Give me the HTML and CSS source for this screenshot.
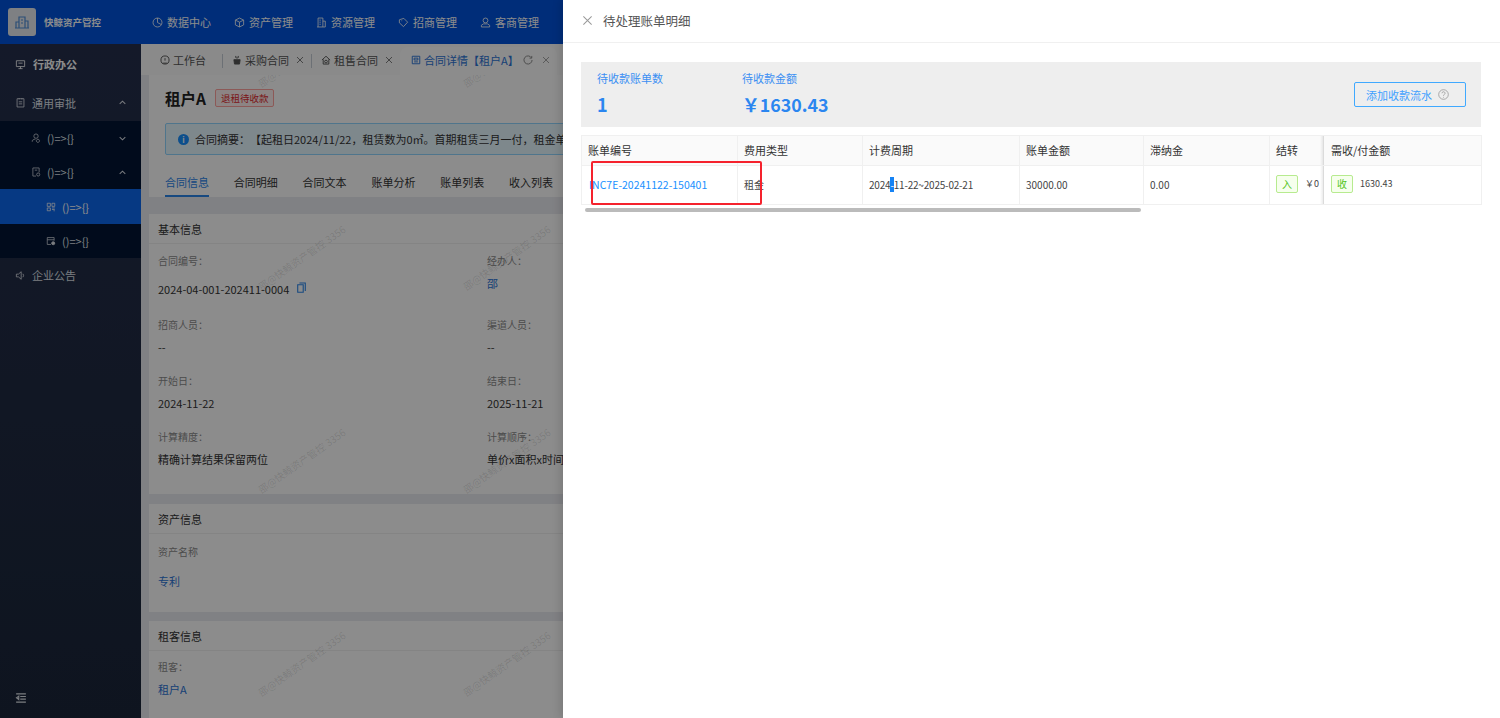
FILE: index.html
```html
<!DOCTYPE html>
<html lang="zh-CN">
<head>
    <meta charset="UTF-8">
    <meta name="viewport" content="width=device-width, initial-scale=1.0">
    <title>快鲸资产管控</title>
    <link rel="stylesheet" href="styles.css">
</head>
<body>
    <svg class="sprite" xmlns="http://www.w3.org/2000/svg">
        <symbol id="i-close" viewBox="0 0 16 16"><path d="M2 2l12 12M14 2L2 14"/></symbol>
        <symbol id="i-up" viewBox="0 0 16 16"><path d="M3 10.5l5-5 5 5"/></symbol>
        <symbol id="i-down" viewBox="0 0 16 16"><path d="M3 5.5l5 5 5-5"/></symbol>
    </svg>

    <header class="topbar">
        <div class="brand">
            <div class="brand-logo">
                <svg viewBox="0 0 16 16"><path d="M2 14V8h3M5 14V3h6v11M11 7h3v7M1 14h14M7 6h2M7 9h2"/></svg>
            </div>
            <span>快鲸资产管控</span>
        </div>
        <nav class="topnav">
            <a><svg viewBox="0 0 16 16"><circle cx="8" cy="8" r="6.5"/><path d="M8 8V1.5M8 8l5.5 3"/></svg>数据中心</a>
            <a><svg viewBox="0 0 16 16"><path d="M8 1.5l6 3v7l-6 3-6-3v-7zM2 4.5l6 3 6-3M8 7.5v7"/></svg>资产管理</a>
            <a><svg viewBox="0 0 16 16"><path d="M3 14.5v-13h7v13M10 6h3.500v8.500H1.500M5 4.500h2M5 7.500h2M5 10.500h2"/></svg>资源管理</a>
            <a><svg viewBox="0 0 16 16"><path d="M8.500 2l5.500 5.500L8 14 2 8.500V4zM5 5.500h1"/></svg>招商管理</a>
            <a><svg viewBox="0 0 16 16"><circle cx="8" cy="5" r="3.500"/><path d="M2 14.500v-2.500l3-2h6l3 2v2.500z"/></svg>客商管理</a>
        </nav>
    </header>

    <div class="layout">
        <aside class="sidebar">
            <div class="side-item side-item-main">
                <svg viewBox="0 0 16 16"><path d="M2 2.500h12v8.500H2zM5 14h6M8 11v3M5 6h6"/></svg>
                <span>行政办公</span>
            </div>
            <div class="side-item side-item-group">
                <svg viewBox="0 0 16 16"><path d="M3 2.500h10v12H3zM6 1.500v2M10 1.500v2M5.500 7h5M5.500 10h5"/></svg>
                <span>通用审批</span>
                <svg class="chevron"><use href="#i-up"/></svg>
            </div>
            <div class="side-sub">
                <div class="sub-item">
                    <svg viewBox="0 0 16 16"><circle cx="8" cy="5" r="3.500"/><path d="M2 14v-2l3-2h2M11 10a2.500 2.500 0 1 0 .1 0"/></svg>
                    <span>()=&gt;{}</span>
                    <svg class="chevron"><use href="#i-down"/></svg>
                </div>
                <div class="sub-item">
                    <svg viewBox="0 0 16 16"><path d="M8 14.500H3v-13h10v7M6 5h4"/><circle cx="11.500" cy="12" r="2.500"/></svg>
                    <span>()=&gt;{}</span>
                    <svg class="chevron"><use href="#i-up"/></svg>
                </div>
                <div class="leaf-item leaf-active">
                    <svg viewBox="0 0 16 16"><path d="M2 2h5v5H2zM9.500 2h4.500v5H9.500zM2 9.500h5V14H2zM9.500 9.500H14M9.500 12H14M12 14h2"/></svg>
                    <span>()=&gt;{}</span>
                </div>
                <div class="leaf-item">
                    <svg viewBox="0 0 16 16"><path d="M8 13.500H2v-11h11v5M2 6h11"/><circle cx="11.500" cy="11.500" r="2.500" class="dot"/></svg>
                    <span>()=&gt;{}</span>
                </div>
            </div>
            <div class="side-item">
                <svg viewBox="0 0 16 16"><path d="M2 6v4h3l4 3.500v-11L5 6zM11.500 5.500a4 4 0 0 1 0 5"/></svg>
                <span>企业公告</span>
            </div>
            <div class="side-collapse">
                <svg viewBox="0 0 16 16"><path d="M1.500 2.500h13M7 6h7.500M7 9.500h7.500M1.500 13.500h13M5 5.500l-3 2.200 3 2.300z"/></svg>
            </div>
        </aside>

        <main class="main">
            <div class="tabstrip">
                <div class="tab tab-home">
                    <svg viewBox="0 0 16 16"><circle cx="8" cy="8" r="6.500"/><path d="M8 9V5M5 13h6"/></svg>
                    <span>工作台</span>
                </div>
                <div class="tab">
                    <svg viewBox="0 0 16 16"><path class="dot" d="M3 7.500h10l-1 7H4z"/><path d="M6 1.500v3M10 1.500v3M8 3v3"/></svg>
                    <span>采购合同</span>
                    <svg class="tab-close"><use href="#i-close"/></svg>
                </div>
                <div class="tab">
                    <svg viewBox="0 0 16 16"><path d="M1.500 8L8 2l6.500 6M3.500 7v7.500h9V7"/><circle cx="8" cy="10.500" r="2.200"/></svg>
                    <span>租售合同</span>
                    <svg class="tab-close"><use href="#i-close"/></svg>
                </div>
                <div class="tab tab-active">
                    <svg viewBox="0 0 16 16"><path d="M2 2h12v12H2zM5 5h6v3H5zM5 11h6"/></svg>
                    <span class="tab-active-text">合同详情【租户A】</span>
                    <svg class="tab-reload" viewBox="0 0 16 16"><path d="M13.500 4.500A6.500 6.500 0 1 0 14.500 8M14 1.500v3.500h-3.500"/></svg>
                    <svg class="tab-close"><use href="#i-close"/></svg>
                </div>
            </div>

            <div class="content">
                <section class="head-panel">
                    <div class="head-title">
                        <h1>租户A</h1>
                        <span class="status-tag">退租待收款</span>
                    </div>
                    <div class="alert">
                        <span class="alert-icon">i</span>
                        <span class="alert-text">合同摘要：【起租日2024/11/22，租赁数为0㎡。首期租赁三月一付，租金单</span>
                    </div>
                    <div class="subtabs">
                        <a class="subtab-active">合同信息</a>
                        <a>合同明细</a>
                        <a>合同文本</a>
                        <a>账单分析</a>
                        <a>账单列表</a>
                        <a>收入列表</a>
                    </div>
                </section>

                <section class="card card-basic">
                    <div class="card-head">基本信息</div>
                    <div class="field-grid">
                        <div class="field field-first">
                            <label>合同编号：</label>
                            <div class="value value-copy">
                                2024-04-001-202411-0004
                                <svg viewBox="0 0 16 16"><path d="M5 1.500h8.500v11.500M2.500 4h8v11h-8z"/></svg>
                            </div>
                        </div>
                        <div class="field">
                            <label>经办人：</label>
                            <div class="value value-link">邵</div>
                        </div>
                        <div class="field">
                            <label>招商人员：</label>
                            <div class="value">--</div>
                        </div>
                        <div class="field">
                            <label>渠道人员：</label>
                            <div class="value">--</div>
                        </div>
                        <div class="field">
                            <label>开始日：</label>
                            <div class="value">2024-11-22</div>
                        </div>
                        <div class="field">
                            <label>结束日：</label>
                            <div class="value">2025-11-21</div>
                        </div>
                        <div class="field">
                            <label>计算精度：</label>
                            <div class="value">精确计算结果保留两位</div>
                        </div>
                        <div class="field">
                            <label>计算顺序：</label>
                            <div class="value">单价x面积x时间</div>
                        </div>
                    </div>
                </section>

                <section class="card card-asset">
                    <div class="card-head">资产信息</div>
                    <div class="asset-body">
                        <label>资产名称</label>
                        <div class="value value-link">专利</div>
                    </div>
                </section>

                <section class="card card-tenant">
                    <div class="card-head">租客信息</div>
                    <div class="tenant-body">
                        <label>租客：</label>
                        <div class="value value-link">租户A</div>
                    </div>
                </section>

                <div class="watermarks">
                    <span>邵@快鲸资产管控 3356</span><span>邵@快鲸资产管控 3356</span>
                    <span>邵@快鲸资产管控 3356</span><span>邵@快鲸资产管控 3356</span>
                    <span>邵@快鲸资产管控 3356</span><span>邵@快鲸资产管控 3356</span>
                    <span>邵@快鲸资产管控 3356</span><span>邵@快鲸资产管控 3356</span>
                </div>
            </div>
        </main>
    </div>

    <div class="mask"></div>

    <aside class="drawer">
        <div class="drawer-head">
            <svg class="drawer-close"><use href="#i-close"/></svg>
            <span>待处理账单明细</span>
        </div>
        <div class="drawer-body">
            <div class="summary">
                <div class="stat stat-count">
                    <div class="stat-label">待收款账单数</div>
                    <div class="stat-value">1</div>
                </div>
                <div class="stat">
                    <div class="stat-label">待收款金额</div>
                    <div class="stat-value stat-money">￥1630.43</div>
                </div>
                <button class="add-btn">
                    添加收款流水
                    <svg viewBox="0 0 16 16"><circle cx="8" cy="8" r="7"/><path d="M5.800 6.200a2.200 2.200 0 1 1 3.300 1.900c-.8.400-1.100.9-1.100 1.700M8 11.500v1"/></svg>
                </button>
            </div>

            <div class="bill-wrap">
                <table class="bill-table">
                    <colgroup>
                        <col class="col-no"><col class="col-type"><col class="col-period"><col class="col-amount">
                        <col class="col-late"><col class="col-carry"><col class="col-due">
                    </colgroup>
                    <thead>
                        <tr>
                            <th>账单编号</th>
                            <th>费用类型</th>
                            <th>计费周期</th>
                            <th>账单金额</th>
                            <th>滞纳金</th>
                            <th>结转</th>
                            <th class="cell-fixed">需收/付金额</th>
                        </tr>
                    </thead>
                    <tbody>
                        <tr>
                            <td><a class="bill-link">INC7E-20241122-150401</a></td>
                            <td>租金</td>
                            <td class="cell-period">2024<span class="selected">-</span>11-22~2025-02-21</td>
                            <td>30000.00</td>
                            <td>0.00</td>
                            <td class="cell-carry"><span class="in-tag">入</span><span class="carry-val">￥0</span></td>
                            <td class="cell-fixed"><span class="in-tag">收</span><span class="due-val">1630.43</span></td>
                        </tr>
                    </tbody>
                </table>
                <div class="scrollbar"></div>
                <div class="mark-box"></div>
            </div>
        </div>
    </aside>
</body>
</html>
```

FILE: styles.css
```css
* {
    margin: 0;
    padding: 0;
    box-sizing: border-box;
    font-family: "Noto Sans CJK SC", "Noto Sans", sans-serif;
}

html, body {
    height: 100%;
    overflow: hidden;
}

body {
    display: flex;
    flex-direction: column;
    background-color: #e9ecf1;
    color: #333;
    font-size: 11px;
}

svg {
    fill: none;
    stroke: currentColor;
    stroke-width: 1.2;
    flex-shrink: 0;
}

symbol path {
    fill: none;
}

.sprite {
    display: none;
}

/* top bar */
.topbar {
    height: 44px;
    flex-shrink: 0;
    display: flex;
    align-items: center;
    background-color: #0053dd;
    color: #fff;
}

.brand {
    width: 152px;
    padding-left: 8px;
    display: flex;
    align-items: center;
    gap: 8px;
    font-size: 9.500px;
    font-weight: 700;
}

.brand-logo {
    width: 28px;
    height: 28px;
    border-radius: 3px;
    background-color: #e6e9ef;
    color: #4f8fd8;
    display: flex;
    align-items: center;
    justify-content: center;
}

.brand-logo svg {
    width: 16px;
    height: 16px;
}

.topnav {
    display: flex;
}

.topnav a {
    width: 82px;
    display: flex;
    align-items: center;
    gap: 4px;
    font-size: 11px;
}

.topnav svg {
    width: 11px;
    height: 11px;
}

/* sidebar */
.layout {
    flex: 1;
    min-height: 0;
    display: flex;
}

.sidebar {
    width: 141px;
    flex-shrink: 0;
    display: flex;
    flex-direction: column;
    background: linear-gradient(#252f4c, #1b263a);
    color: #dfe3ea;
}

.side-item {
    height: 34px;
    padding-left: 15px;
    display: flex;
    align-items: center;
    gap: 6px;
    font-size: 11px;
}

.side-item > svg:first-child {
    width: 11px;
    height: 11px;
}

.side-item-main {
    height: 40px;
    gap: 7px;
    font-weight: 700;
    color: #fff;
}

.side-item-group {
    height: 37px;
}

.chevron {
    width: 9px;
    height: 9px;
    stroke-width: 1.800;
    margin-left: auto;
    margin-right: 14px;
}

.side-sub {
    background-color: #021433;
}

.sub-item, .leaf-item {
    height: 34px;
    display: flex;
    align-items: center;
    gap: 6px;
    font-size: 11px;
}

.sub-item {
    padding-left: 31px;
}

.leaf-item {
    padding-left: 46px;
}

.sub-item > svg:first-child, .leaf-item svg {
    width: 10px;
    height: 10px;
}

.leaf-active {
    height: 35px;
    background-color: #0c68ee;
    color: #fff;
}

.dot {
    fill: currentColor;
}

.side-collapse {
    margin-top: auto;
    padding: 0 0 14px 15px;
}

.side-collapse svg {
    display: block;
    width: 12px;
    height: 12px;
    stroke-width: 1.500;
}

/* main area, sits behind the mask */
.main {
    flex: 1;
    min-width: 0;
    display: flex;
    flex-direction: column;
}

.tabstrip {
    height: 31px;
    flex-shrink: 0;
    padding-left: 8px;
    display: flex;
    align-items: flex-end;
    background-color: #fbfcfc;
    color: #555;
}

.tab {
    height: 28px;
    padding: 0 7px 2px 10px;
    display: flex;
    align-items: center;
    gap: 3px;
    font-size: 11px;
    white-space: nowrap;
    position: relative;
}

.tab svg {
    width: 10px;
    height: 10px;
    stroke-width: 1.500;
}

.tab + .tab::before {
    content: "";
    position: absolute;
    left: 0;
    top: 7px;
    height: 14px;
    border-left: 1px solid #c5ccd6;
}

.tab .tab-close {
    width: 8px;
    height: 8px;
    margin-left: 4px;
}

.tab-home {
    padding-left: 11px;
    width: 73px;
}

.tab-active {
    width: 157px;
    padding-left: 11px;
    border-radius: 8px 8px 0 0;
    background-color: #fff;
    color: #2b74d6;
}

.tab-active::before {
    display: none;
}

.tab-active-text {
    width: 90px;
}

.tab-active .tab-reload {
    margin-left: 6px;
    color: #888;
}

.tab-active .tab-close {
    margin-left: 6px;
    color: #888;
}

.content {
    flex: 1;
    min-height: 0;
    padding-left: 8px;
    position: relative;
    overflow: hidden;
}

.head-panel {
    height: 122px;
    padding: 13px 0 0 16px;
    background-color: #fff;
    overflow: hidden;
}

.head-title {
    height: 20px;
    display: flex;
    align-items: center;
    gap: 9px;
}

.head-title h1 {
    font-size: 15.500px;
    line-height: 20px;
    color: #222;
}

.status-tag {
    height: 18px;
    padding: 0 5px;
    line-height: 16px;
    border: 1px solid #ffa39e;
    border-radius: 2px;
    background-color: #fff1f0;
    color: #e0282e;
    font-size: 9.500px;
}

.alert {
    height: 32px;
    margin-top: 15px;
    padding-left: 12px;
    display: flex;
    align-items: center;
    gap: 6px;
    white-space: nowrap;
    border: 1px solid #91d5ff;
    background-color: #e6f7ff;
    border-radius: 2px;
    font-size: 11px;
}

.alert-text {
    text-spacing-trim: space-all;
}

.alert-icon {
    width: 11px;
    height: 11px;
    line-height: 11px;
    text-align: center;
    border-radius: 50%;
    background-color: #1890ff;
    color: #fff;
    font-size: 8px;
    font-weight: 700;
}

.subtabs {
    height: 42px;
    display: flex;
    gap: 24.800px;
    font-size: 11px;
    white-space: nowrap;
}

.subtabs a {
    padding-top: 19px;
    line-height: 16px;
    height: 42px;
}

.subtab-active {
    color: #2b86ea;
    border-bottom: 2px solid #2b86ea;
}

.card {
    margin-top: 10px;
    background-color: #fff;
}

.card-basic {
    height: 280px;
    margin-top: 17px;
}

.card-asset {
    height: 108px;
}

.card-tenant {
    margin-top: 9px;
    height: 130px;
}

.card-head {
    height: 30px;
    line-height: 30px;
    padding-left: 9px;
    font-size: 11px;
    border-bottom: 1px solid #f0f0f0;
    color: #333;
}

.field-grid {
    padding: 7px 0 0 9px;
    display: grid;
    grid-template-columns: 329px 329px;
}

.field {
    padding-bottom: 12px;
    white-space: nowrap;
}

label {
    display: block;
    line-height: 20px;
    font-size: 10px;
    color: #8c8c8c;
}

.value {
    line-height: 24px;
    font-size: 11px;
    color: #333;
}

.value-link {
    color: #2b74d6;
}

.field-first {
    padding-bottom: 14px;
}

.value-copy {
    margin-top: 6px;
    display: flex;
    align-items: center;
    gap: 7px;
}

.value-copy svg {
    width: 11px;
    height: 13px;
    margin-top: -4px;
    stroke-width: 1.600;
    color: #2b86ea;
}

.asset-body {
    padding: 8px 0 0 9px;
}

.asset-body .value {
    margin-top: 7px;
}

.tenant-body {
    padding: 6px 0 0 9px;
}

/* tiled over the page content */
.watermarks {
    position: absolute;
    left: 58px;
    top: -122px;
    display: grid;
    grid-template-columns: 205px 205px;
    grid-auto-rows: 203px;
    pointer-events: none;
}

.watermarks span {
    display: flex;
    align-items: center;
    justify-content: center;
    white-space: nowrap;
    transform: rotate(-35deg);
    font-size: 10px;
    color: rgba(0, 0, 0, 0.13);
}

/* modal */
.mask {
    position: absolute;
    inset: 0;
    background-color: rgba(0, 0, 0, 0.45);
}

.drawer {
    position: absolute;
    top: 0;
    right: 0;
    bottom: 0;
    width: 937px;
    background-color: #fff;
    box-shadow: -3px 0 8px rgba(0, 0, 0, 0.12);
}

.drawer-head {
    height: 43px;
    padding: 0 0 2px 19px;
    display: flex;
    align-items: center;
    gap: 10px;
    border-bottom: 1px solid #f0f0f0;
    font-size: 12.500px;
    color: #555;
}

.drawer-close {
    width: 11px;
    height: 11px;
    stroke-width: 1.500;
    color: #999;
}

.drawer-body {
    padding: 19px 19px 0 18px;
}

.summary {
    height: 65px;
    padding-left: 16px;
    display: flex;
    align-items: center;
    background-color: #eee;
}

.stat {
    padding-bottom: 2px;
}

.stat-count {
    width: 145px;
}

.stat-label {
    line-height: 16px;
    font-size: 11px;
    color: #3b8ff3;
}

.stat-value {
    margin-top: 5px;
    line-height: 26px;
    font-size: 18px;
    font-weight: 700;
    color: #2b86f0;
}

.stat-money {
    font-size: 17.800px;
}

.add-btn {
    width: 112px;
    height: 25px;
    margin-left: auto;
    margin-right: 15px;
    padding-left: 11px;
    display: flex;
    align-items: center;
    gap: 6px;
    background: transparent;
    border: 1px solid #40a9ff;
    border-radius: 2px;
    color: #40a0ff;
    font-size: 11px;
}

.add-btn svg {
    width: 11px;
    height: 11px;
    color: #999;
}

.bill-wrap {
    margin-top: 8px;
    position: relative;
}

.bill-table {
    width: 900px;
    table-layout: fixed;
    border-collapse: collapse;
    border: 1px solid #f0f0f0;
    font-size: 10px;
}

.col-no { width: 156px; }
.col-type { width: 125px; }
.col-period { width: 157px; }
.col-amount { width: 124px; }
.col-late { width: 126px; }
.col-carry { width: 54px; }
.col-due { width: 158px; }

.bill-table th {
    height: 30px;
    padding: 0 0 2px 6px;
    text-align: left;
    font-weight: 400;
    font-size: 11px;
    color: #333;
    background-color: #fafafa;
    border-right: 1px solid #f0f0f0;
    border-bottom: 1px solid #f0f0f0;
}

.bill-table td {
    height: 39px;
    padding: 0 0 2px 6px;
    white-space: nowrap;
    color: #444;
    border-right: 1px solid #f0f0f0;
    border-bottom: 1px solid #f0f0f0;
}

.bill-table .cell-fixed {
    position: relative;
    padding-left: 7px;
    border-right: none;
}

.cell-fixed::before {
    content: "";
    position: absolute;
    left: -4px;
    top: 0;
    bottom: 0;
    width: 4px;
    background: linear-gradient(to right, transparent, rgba(0, 0, 0, 0.1));
}

.bill-table .cell-period {
    letter-spacing: -0.2px;
}

.bill-link {
    margin-left: 1px;
    color: #1890ff;
    font-size: 10.500px;
}

.selected {
    display: inline-block;
    line-height: 15px;
    background-color: #1683f5;
    color: #fff;
}

.in-tag {
    display: inline-block;
    width: 22px;
    height: 18px;
    line-height: 16px;
    text-align: center;
    vertical-align: middle;
    background-color: #f6ffed;
    border: 1px solid #b7eb8f;
    border-radius: 2px;
    color: #52c41a;
}

.carry-val {
    margin-left: 7px;
    font-size: 9px;
}

.due-val {
    margin-left: 7px;
    font-size: 9px;
}

.scrollbar {
    width: 556px;
    height: 4px;
    margin: 3px 0 0 4px;
    border-radius: 2px;
    background-color: #bbb;
}

/* red annotation box drawn on the screenshot */
.mark-box {
    position: absolute;
    left: 10px;
    top: 26px;
    width: 171px;
    height: 44px;
    border: 2px solid #f5222d;
    border-radius: 2px;
}
```
